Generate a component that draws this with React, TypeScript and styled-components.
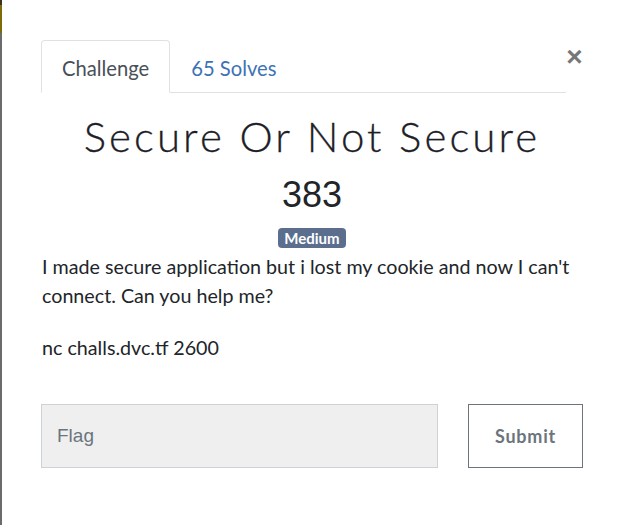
import React from 'react'
import styled, { createGlobalStyle } from 'styled-components'

const GlobalStyle = createGlobalStyle`
  html, body {
    margin: 0;
    padding: 0;
    background: #fff;
  }
  body {
    font-family: 'Lato', 'Liberation Sans', sans-serif;
    color: #212529;
  }
`

const Page = styled.div`
  display: flex;
  width: 624px;
  height: 525px;
  overflow: hidden;
`
const Edge = styled.div`
  width: 2px;
  flex-shrink: 0;
  background: linear-gradient(
    to bottom,
    #3a3320 0,
    #3a3320 5px,
    #7d6a08 5px,
    #7d6a08 33px,
    #6b6b6b 33px
  );
`
const Modal = styled.div`
  flex: 1;
  padding: 40px 41px 0 39px;
  display: flex;
  flex-direction: column;
`
const Header = styled.div`
  display: flex;
  align-items: flex-start;
`
const Tabs = styled.nav`
  display: flex;
  width: 525px;
  border-bottom: 1px solid #dee2e6;
`
const Tab = styled.div<{ $active?: boolean }>`
  height: 51px;
  line-height: 55px;
  padding: 0 20px;
  font-size: 20.2px;
  margin-bottom: -1px;
  border: 1px solid ${(p) => (p.$active ? '#dee2e6' : 'transparent')};
  border-bottom-color: ${(p) => (p.$active ? '#fff' : 'transparent')};
  border-radius: 4px 4px 0 0;
  color: ${(p) => (p.$active ? '#495057' : '#3d72b4')};
  background: ${(p) => (p.$active ? '#fff' : 'transparent')};
`
const Close = styled.div`
  flex: 1;
  text-align: center;
  font-family: 'Liberation Sans', sans-serif;
  font-weight: 700;
  font-size: 28px;
  line-height: 32px;
  margin-top: 1px;
  color: #777;
`
const Body = styled.div`
  display: flex;
  flex-direction: column;
  align-items: center;
`
const Title = styled.h2`
  margin: 17px 0 0;
  font-family: 'Lato', sans-serif;
  font-weight: 300;
  font-size: 42px;
  letter-spacing: 3.1px;
  line-height: 52px;
  color: #1c2026;
  -webkit-text-stroke: 0.3px #1c2026;
`
const Points = styled.div`
  font-family: 'Liberation Sans', sans-serif;
  font-size: 36px;
  line-height: 44px;
  margin-top: 11px;
  color: #212529;
`
const Badge = styled.span`
  margin-top: 11px;
  background: #5b6e8d;
  color: #fff;
  font-weight: 700;
  font-size: 15px;
  line-height: 20px;
  padding: 0 6px;
  border-radius: 4px;
`
const Description = styled.div`
  align-self: stretch;
  font-size: 19.7px;
  line-height: 29px;
  color: #212529;
  padding-left: 1px;
  margin-top: 4px;
`
const Para = styled.p`
  margin: 0 0 23px;
`
const Form = styled.form`
  display: flex;
  gap: 30px;
  margin-top: 19px;
`
const Input = styled.input`
  width: 397px;
  height: 64px;
  box-sizing: border-box;
  background: #efefef;
  border: 1px solid #cdd2d8;
  padding: 0 15px;
  font-family: 'Liberation Sans', sans-serif;
  font-size: 19px;
  color: #495057;
  outline: none;
  &::placeholder {
    color: #6c757d;
  }
`
const SubmitButton = styled.button`
  width: 115px;
  height: 64px;
  background: #fff;
  border: 1px solid #6c757d;
  font-family: 'Lato', sans-serif;
  font-weight: 700;
  font-size: 18px;
  letter-spacing: 0.8px;
  color: #6c757d;
`

export default function App() {
  return (
    <Page>
      <GlobalStyle />
      <Edge />
      <Modal>
        <Header>
          <Tabs>
            <Tab $active>Challenge</Tab>
            <Tab>65 Solves</Tab>
          </Tabs>
          <Close>×</Close>
        </Header>
        <Body>
          <Title>Secure Or Not Secure</Title>
          <Points>383</Points>
          <Badge>Medium</Badge>
        </Body>
        <Description>
          <Para>
            I made secure application but i lost my cookie and now I can't connect. Can you help me?
          </Para>
          <Para>nc challs.dvc.tf 2600</Para>
        </Description>
        <Form onSubmit={(e) => e.preventDefault()}>
          <Input placeholder="Flag" />
          <SubmitButton type="submit">Submit</SubmitButton>
        </Form>
      </Modal>
    </Page>
  )
}
